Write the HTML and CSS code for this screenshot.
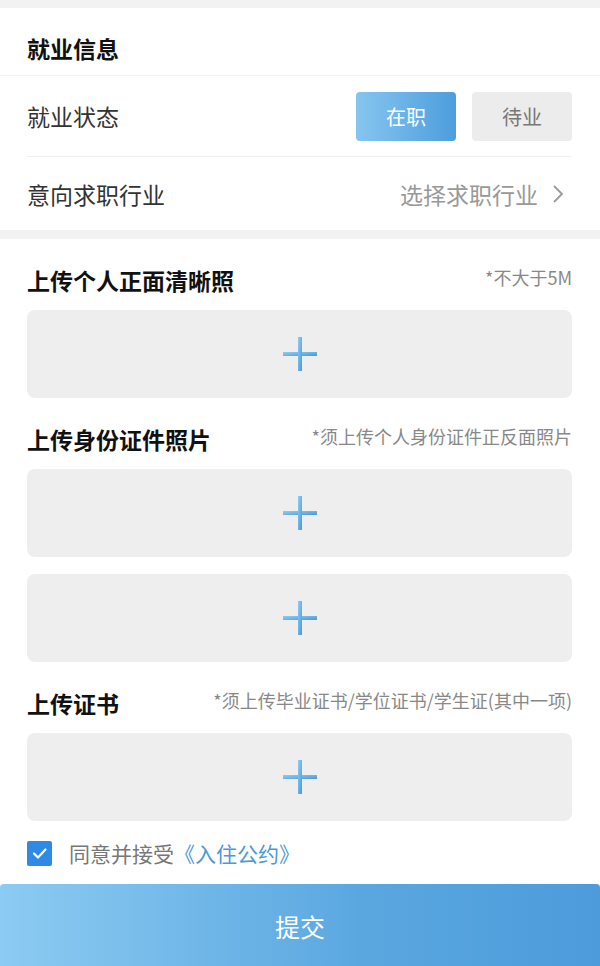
FILE: index.html
```html
<!DOCTYPE html>
<html lang="zh-CN">
<head>
    <meta charset="UTF-8">
    <meta name="viewport" content="width=device-width, initial-scale=1.0">
    <title>就业信息</title>
    <link rel="stylesheet" href="styles.css">
</head>
<body>

<!-- 就业信息 -->
<div class="card">
    <div class="card-title">就业信息</div>
    <div class="row">
        <span class="label">就业状态</span>
        <div class="status">
            <button class="status-btn active">在职</button>
            <button class="status-btn">待业</button>
        </div>
    </div>
    <div class="row last">
        <span class="label">意向求职行业</span>
        <span class="picker">选择求职行业
            <svg class="chevron" width="12" height="20" viewBox="0 0 12 20"><polyline points="2,2 10,10 2,18" fill="none" stroke="#9a9a9a" stroke-width="1.8"/></svg>
        </span>
    </div>
</div>

<!-- 上传 -->
<div class="card uploads">
    <div class="group">
        <div class="group-head">
            <span class="group-title">上传个人正面清晰照</span>
            <span class="note">*不大于5M</span>
        </div>
        <div class="upload-box"><svg class="plus" width="34" height="34" viewBox="0 0 34 34"><use href="#plus"/></svg></div>
    </div>

    <div class="group">
        <div class="group-head">
            <span class="group-title">上传身份证件照片</span>
            <span class="note">*须上传个人身份证件正反面照片</span>
        </div>
        <div class="upload-box"><svg class="plus" width="34" height="34" viewBox="0 0 34 34"><use href="#plus"/></svg></div>
        <div class="upload-box"><svg class="plus" width="34" height="34" viewBox="0 0 34 34"><use href="#plus"/></svg></div>
    </div>

    <div class="group">
        <div class="group-head">
            <span class="group-title">上传证书</span>
            <span class="note">*须上传毕业证书/学位证书/学生证(其中一项)</span>
        </div>
        <div class="upload-box"><svg class="plus" width="34" height="34" viewBox="0 0 34 34"><use href="#plus"/></svg></div>
    </div>

    <div class="agree">
        <span class="checkbox">
            <svg width="25" height="25" viewBox="0 0 25 25"><polyline points="7,12.5 11,16.5 18.5,8.5" fill="none" stroke="#fff" stroke-width="2.2" stroke-linecap="round" stroke-linejoin="round"/></svg>
        </span>
        <span class="agree-text">同意并接受<a class="link">《入住公约》</a></span>
    </div>
</div>

<button class="submit">提交</button>

<!-- 加号图标 -->
<svg width="0" height="0" class="defs">
    <defs>
        <linearGradient id="plusGrad" x1="0" y1="0" x2="1" y2="1">
            <stop offset="0" stop-color="#8fcdf2"/>
            <stop offset="1" stop-color="#4a98d6"/>
        </linearGradient>
        <g id="plus">
            <rect x="0" y="15" width="34" height="4" fill="url(#plusGrad)"/>
            <rect x="15" y="0" width="4" height="34" fill="url(#plusGrad)"/>
        </g>
    </defs>
</svg>

</body>
</html>
```

FILE: styles.css
```css
body {
    margin: 0;
    padding-top: 8px;
    background-color: #f2f2f2;
    font-family: "Noto Sans CJK SC", "Noto Sans", sans-serif;
    color: #333;
}

.card {
    background-color: #fff;
}

.card-title {
    height: 53px;
    line-height: 53px;
    padding: 14px 27px 0;
    font-size: 23px;
    font-weight: bold;
    color: #111;
    border-bottom: 1px solid #f1f1f1;
}

.row {
    display: flex;
    align-items: center;
    justify-content: space-between;
    margin: 0 28px 0 27px;
    height: 80px;
    border-bottom: 1px solid #f0f0f0;
}

.row.last {
    height: 73px;
    border-bottom: none;
}

.label {
    font-size: 23px;
    color: #333;
}

.status {
    display: flex;
    gap: 16px;
}

.status-btn {
    width: 100px;
    height: 49px;
    border: none;
    border-radius: 4px;
    font-family: inherit;
    font-size: 20px;
    color: #777;
    background-color: #ececec;
}

.status-btn.active {
    color: #fff;
    background: linear-gradient(to right, #86c6f0, #4d9ddd);
}

.picker {
    display: flex;
    align-items: center;
    gap: 14px;
    font-size: 23px;
    color: #999;
    margin-right: 8px;
}

.uploads {
    margin-top: 9px;
    padding: 26px 28px 0 27px;
}

.group {
    display: flex;
    flex-direction: column;
    gap: 17px;
    margin-bottom: 26px;
}

.group-head {
    display: flex;
    align-items: center;
    justify-content: space-between;
    height: 30px;
    margin-bottom: -2px;
}

.group-title {
    font-size: 23px;
    font-weight: bold;
    color: #111;
}

.note {
    font-size: 18px;
    color: #888;
    margin-top: -6px;
}

.upload-box {
    display: flex;
    align-items: center;
    justify-content: center;
    height: 88px;
    border-radius: 8px;
    background-color: #eeeeee;
}

.agree {
    display: flex;
    align-items: center;
    gap: 17px;
    height: 25px;
    margin-top: -6px;
    padding-bottom: 18px;
}

.checkbox {
    width: 25px;
    height: 25px;
    border-radius: 2px;
    background-color: #2f8ae6;
}

.checkbox svg {
    display: block;
}

.agree-text {
    font-size: 21px;
    line-height: 25px;
    color: #777;
}

.link {
    color: #4a9ad8;
}

.submit {
    display: block;
    width: 100%;
    height: 83px;
    border: none;
    border-radius: 4px 4px 0 0;
    font-family: inherit;
    font-size: 25px;
    color: #fff;
    background: linear-gradient(to right, #8ccbf2, #5aa7e0 60%, #4d9bdb);
}

.defs {
    position: absolute;
}
```
